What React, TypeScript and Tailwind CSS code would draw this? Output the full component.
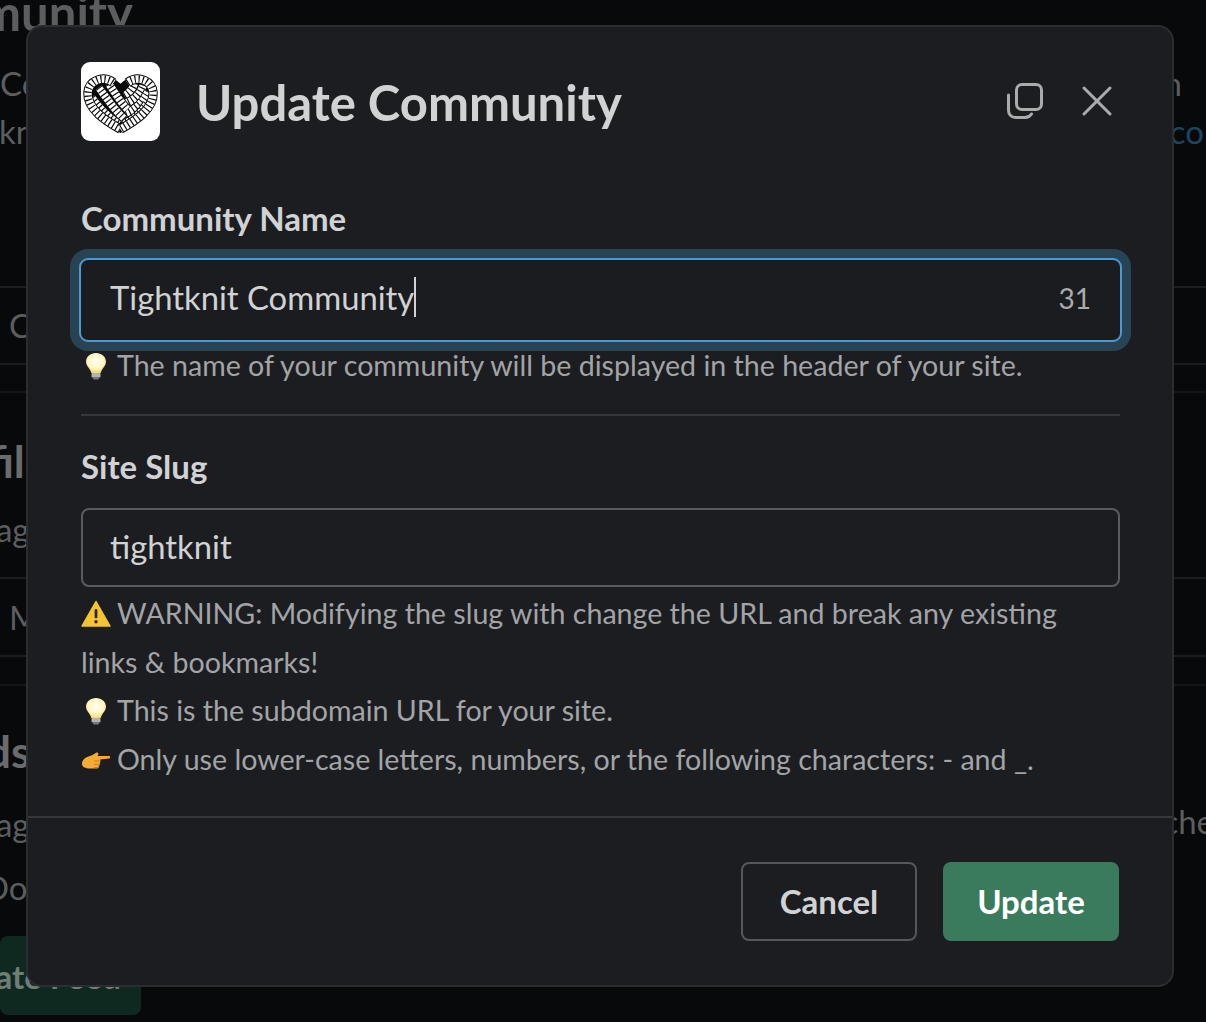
import React from 'react';
import { X } from 'lucide-react';

const Bulb: React.FC = () => (
  <svg viewBox="0 0 30 30" className="inline-block w-[30px] h-[30px] align-[-5px]">
    <defs>
      <radialGradient id="bulbGlow" cx="50%" cy="40%" r="60%">
        <stop offset="0%" stopColor="#fffdf0" />
        <stop offset="65%" stopColor="#fff6c4" />
        <stop offset="100%" stopColor="#f5d565" />
      </radialGradient>
    </defs>
    <path d="M15 2c-5.600 0-10 3.800-10 8.800 0 3.400 2.400 5.600 3.800 7.600.8 1.100 1.200 2.200 1.400 3.600h9.600c.2-1.400.6-2.500 1.400-3.600C22.600 16.400 25 14.200 25 10.800 25 5.800 20.600 2 15 2z" fill="url(#bulbGlow)" />
    <rect x="10.500" y="22" width="9" height="4.500" rx="1" fill="#b3b3b3" />
    <rect x="12" y="26" width="6" height="2.500" rx="1.200" fill="#777" />
  </svg>
);

const Warn: React.FC = () => (
  <svg viewBox="0 0 30 30" className="inline-block w-[30px] h-[30px] align-[-5px]">
    <path d="M15 2.500 29 27H1z" fill="#f5c531" stroke="#f5c531" strokeWidth="1.500" strokeLinejoin="round" />
    <rect x="13.600" y="10" width="2.800" height="9.500" rx="1.400" fill="#2a2a2a" />
    <circle cx="15" cy="22.700" r="1.700" fill="#2a2a2a" />
  </svg>
);

const Hand: React.FC = () => (
  <svg viewBox="0 0 30 30" className="inline-block w-[30px] h-[30px] align-[-7px]">
    <path d="M1 17c0-4 3-6.500 6.500-7.500 3-.9 5-2 7.500-3.700 1.300-.9 3 .3 2.200 1.900l-.7 1.300H28c1.500 0 1.500 2.500 0 2.500l-9 1c.8 1.200.6 2.600-.2 3.300.5 1.300 0 2.500-1 3 .2 1.400-.7 2.700-2.300 2.700H9c-4.500 0-8-1.500-8-4.500z" fill="#f4ac33" />
    <path d="M13 14h5.600M13 17.300h5.800M13 20.500h4.800" stroke="#c77f17" strokeWidth="1" fill="none" />
  </svg>
);

// strands of the rope heart, painted back to front
const ropes = [
  'M44 34C48 32 52 28 54 22',
  'M44 42C52 40 60 33 63 24',
  'M45 52C54 49 63 41 68 30',
  'M42 63C53 59 62 51 67 42',
  'M28 22C34 30 39 40 47 48',
  'M18 26C25 35 33 48 44 58',
  'M11 36C17 45 27 55 38 63',
  'M40 68C26 60 6 48 7 31C8 19 22 13 33 21',
  'M47 21C58 13 72 19 73 31C74 48 54 60 40 68',
];

const HeartLogo: React.FC = () => (
  <svg viewBox="0 0 80 80" className="w-full h-full">
    <path d="M40 72C24 62 2 50 3 30C4 14 26 8 40 22C54 8 76 14 77 30C78 50 56 62 40 72Z" fill="#0a0a0a" />
    {ropes.map((d) => (
      <g key={d}>
        <path d={d} fill="none" stroke="#050505" strokeWidth="9.500" />
        <path d={d} fill="none" stroke="#fff" strokeWidth="7.500" />
        <path d={d} fill="none" stroke="#0a0a0a" strokeWidth="7.500" strokeDasharray="1.200 2.800" />
      </g>
    ))}
  </svg>
);

const CopyIcon: React.FC = () => (
  <svg viewBox="0 0 38 38" className="w-[38px] h-[38px]" fill="none" stroke="#ababad" strokeWidth="3" strokeLinecap="round">
    <rect x="10.500" y="2.500" width="25" height="25" rx="5.500" />
    <path d="M2.500 13v15.500c0 3.900 3.100 7 7 7H19c3 0 5-1.200 6.500-3.500" />
  </svg>
);

const Backdrop: React.FC = () => (
  <div className="flex flex-col text-[33px] text-[#5c5d5f] leading-[40px]">
    <div className="h-[44px] -mt-[10px] -ml-[121px] text-[49px] leading-[44px] font-bold whitespace-nowrap">Community</div>
    <div className="mt-[29px] flex h-[40px] justify-between whitespace-nowrap">
      <span>Community</span>
      <span className="mr-[24px]">n</span>
    </div>
    <div className="mt-[8px] flex h-[40px] justify-between whitespace-nowrap">
      <span className="-ml-[1px]">knit</span>
      <span className="text-[#1d4560] mr-[2px]">co</span>
    </div>
    <div className="mt-[135px] h-[77px] border-t-2 border-[#1c1d20] pt-[17px] pl-[9px] whitespace-nowrap">Community</div>
    <div className="h-[28px] border-t-2 border-[#1c1d20]" />
    <div className="border-t-2 border-[#141518] pt-[46px] -ml-[80px] h-[102px] text-[#6a6b6d] text-[44px] leading-[44px] font-bold whitespace-nowrap">Profile</div>
    <div className="h-[84px] -ml-[69px] pt-[16px] whitespace-nowrap">Manage</div>
    <div className="h-[78px] border-t-2 border-[#1c1d20] pt-[18px] pl-[9px] whitespace-nowrap">Messages</div>
    <div className="h-[29px] border-t-2 border-[#1c1d20]" />
    <div className="border-t-2 border-[#141518] pt-[43px] -ml-[84px] h-[110px] text-[#6a6b6d] text-[44px] leading-[44px] font-bold whitespace-nowrap">Feeds</div>
    <div className="flex h-[73px] justify-between whitespace-nowrap pt-[10px]">
      <span className="-ml-[69px]">Manage</span>
      <span className="-mr-[8px] -mt-[3px]">che</span>
    </div>
    <div className="h-[69px] -ml-[16px] whitespace-nowrap">Domain</div>
    <button className="flex h-[79px] w-[141px] items-center justify-end rounded-[8px] bg-[#0f2920] pr-[20px] font-bold text-[#6f7d77] whitespace-nowrap">
      Update Feed
    </button>
  </div>
);

export default function App() {
  return (
    <div
      className="relative h-[1022px] w-[1206px] overflow-hidden bg-[#08090b]"
      style={{ fontFamily: 'Lato, sans-serif' }}
    >
      <Backdrop />
      <div className="absolute left-[26px] top-[25px] flex h-[962px] w-[1148px] flex-col rounded-[16px] border-2 border-[#2c2d31] bg-[#1b1d21]">
        <div className="flex h-[789px] flex-col px-[53px] pt-[35px]">
          <div className="flex h-[80px] items-center">
            <div className="h-[79px] w-[79px] shrink-0 self-start rounded-[9px] bg-white">
              <HeartLogo />
            </div>
            <h1 className="ml-[36px] text-[49px] leading-[56px] font-bold text-[#d1d2d3]">Update Community</h1>
            <button className="ml-auto -mr-[4px] -mt-[3px] flex items-center gap-[27px] text-[#ababad]">
              <CopyIcon />
              <X size={52} strokeWidth={1.4} strokeLinecap="round" className="text-[#ababad]" />
            </button>
          </div>
          <label className="mt-[56px] block text-[33px] leading-[40px] font-bold text-[#d1d2d3]">Community Name</label>
          <div className="mt-[20px] -ml-[2px] flex h-[84px] w-[1043px] items-center rounded-[9px] border-2 border-[#4a9bd4] bg-[#1a1c20] pl-[29px] pr-[29px] shadow-[0_0_0_9px_#274354]">
            <span className="pb-[4px] text-[32.800px] leading-[44px] text-[#d1d2d3]">Tightknit Community</span>
            <span className="-mt-[6px] h-[40px] w-[2px] bg-[#d1d2d3]" />
            <span className="ml-auto pb-[4px] text-[28px] text-[#ababad]">31</span>
          </div>
          <p className="mt-[3px] h-[68px] text-[28.600px] leading-[40px] text-[#a3a4a6] whitespace-nowrap">
            <span className="inline-block w-[36px]"><Bulb /></span>The name of your community will be displayed in the header of your site.
          </p>
          <div className="mt-[1px] h-[2px] w-[1039px] bg-[#35373a]" />
          <label className="mt-[30px] block text-[33px] leading-[40px] font-bold text-[#d1d2d3]">Site Slug</label>
          <div className="mt-[22px] flex h-[79px] w-[1039px] items-center rounded-[8px] border-2 border-[#5a5b5e] pl-[27px]">
            <span className="pb-[1px] text-[32.800px] leading-[44px] text-[#d1d2d3]">tightknit</span>
          </div>
          <div className="mt-[2px] text-[28.600px] leading-[48.500px] text-[#a3a4a6]">
            <p><span className="inline-block w-[36px]"><Warn /></span>WARNING: Modifying the slug with change the URL and break any existing<br />links &amp; bookmarks!</p>
            <p><span className="inline-block w-[36px]"><Bulb /></span>This is the subdomain URL for your site.</p>
            <p><span className="inline-block w-[36px]"><Hand /></span>Only use lower-case letters, numbers, or the following characters: - and _.</p>
          </div>
        </div>
        <div className="flex flex-1 items-start justify-end gap-[26px] border-t-2 border-[#35373a] pr-[53px] pt-[44px]">
          <button className="flex h-[79px] w-[176px] items-center justify-center rounded-[8px] border-2 border-[#55575a] text-[33px] font-bold text-[#d1d2d3]">
            Cancel
          </button>
          <button className="flex h-[79px] w-[176px] items-center justify-center rounded-[8px] bg-[#3a7b5e] text-[33px] font-bold text-white">
            Update
          </button>
        </div>
      </div>
    </div>
  );
}
